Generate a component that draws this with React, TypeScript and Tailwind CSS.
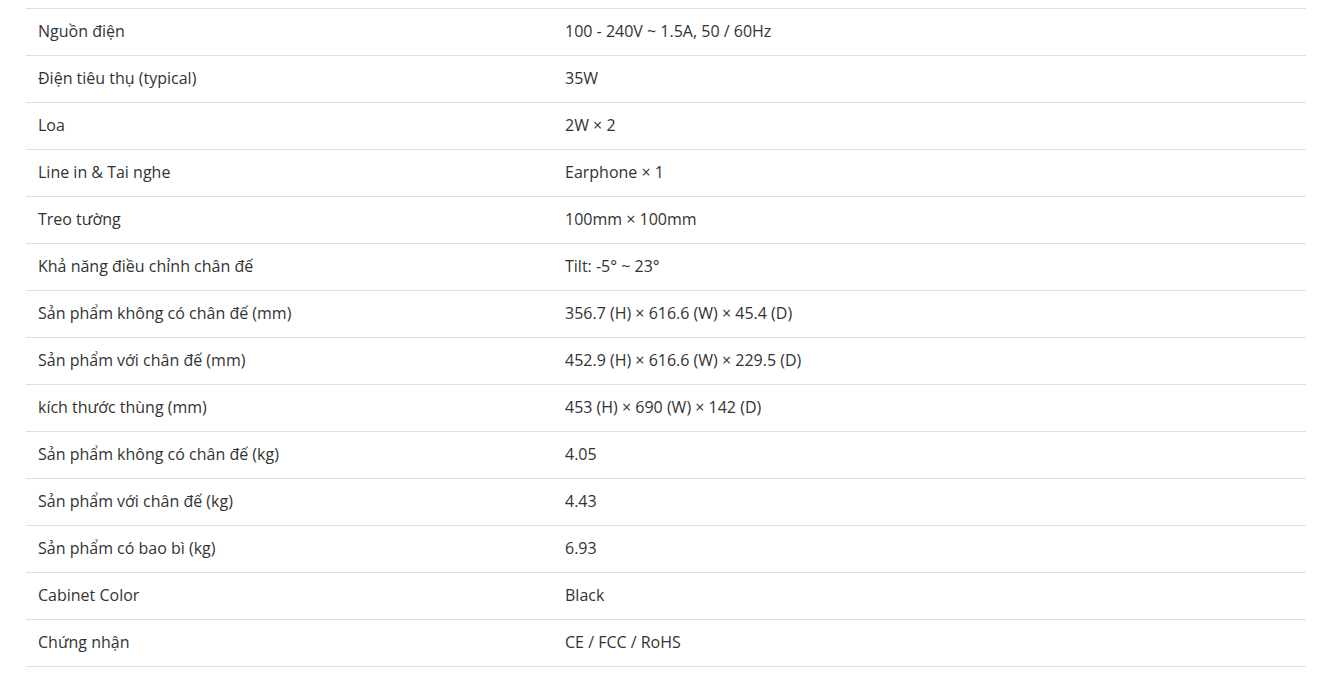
const specs: [string, string][] = [
  ['Nguồn điện', '100 - 240V ~ 1.5A, 50 / 60Hz'],
  ['Điện tiêu thụ (typical)', '35W'],
  ['Loa', '2W × 2'],
  ['Line in & Tai nghe', 'Earphone × 1'],
  ['Treo tường', '100mm × 100mm'],
  ['Khả năng điều chỉnh chân đế', 'Tilt: -5° ~ 23°'],
  ['Sản phẩm không có chân đế (mm)', '356.7 (H) × 616.6 (W) × 45.4 (D)'],
  ['Sản phẩm với chân đế (mm)', '452.9 (H) × 616.6 (W) × 229.5 (D)'],
  ['kích thước thùng (mm)', '453 (H) × 690 (W) × 142 (D)'],
  ['Sản phẩm không có chân đế (kg)', '4.05'],
  ['Sản phẩm với chân đế (kg)', '4.43'],
  ['Sản phẩm có bao bì (kg)', '6.93'],
  ['Cabinet Color', 'Black'],
  ['Chứng nhận', 'CE / FCC / RoHS'],
];

export default function App() {
  return (
    <div className="min-h-[680px] bg-white pt-2 font-['Open_Sans',sans-serif] text-[16px] text-[#333]">
      <div className="mx-[26px] w-[1280px] border-b border-[#dfdfe3]">
        {specs.map(([label, value]) => (
          <div key={label} className="grid grid-cols-[527px_1fr] border-t border-[#dfdfe3]">
            <div className="px-3 pt-[11px] pb-[13px] leading-[22px]">{label}</div>
            <div className="px-3 pt-[11px] pb-[13px] leading-[22px]">{value}</div>
          </div>
        ))}
      </div>
    </div>
  );
}
